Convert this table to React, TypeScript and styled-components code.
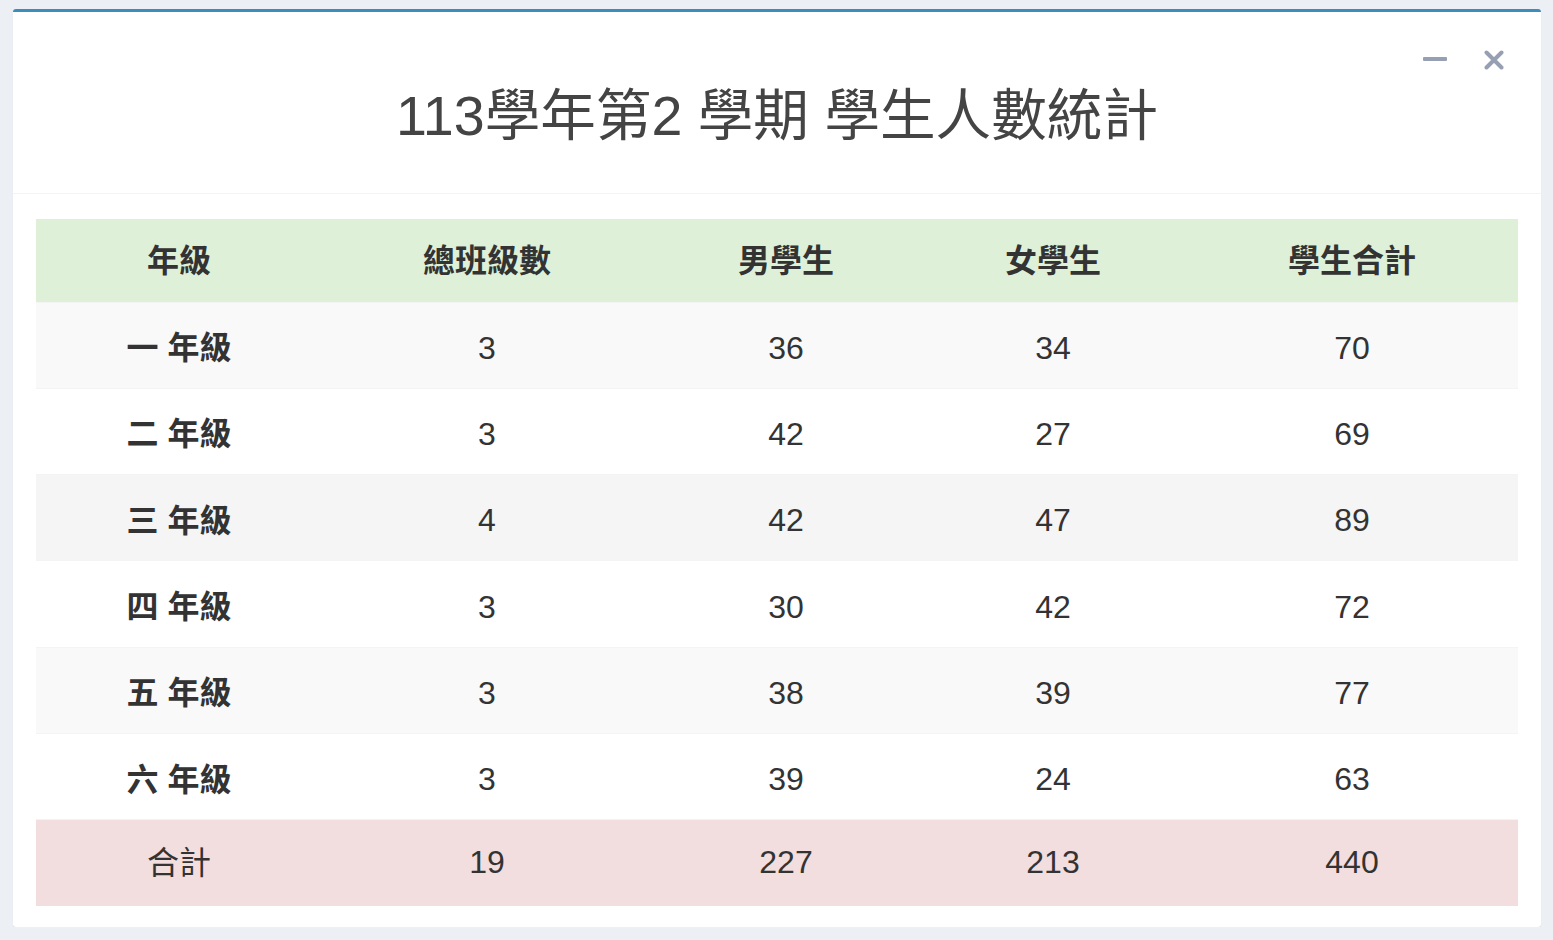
import React from "react";
import styled, { createGlobalStyle } from "styled-components";

const GlobalStyle = createGlobalStyle`
  html, body {
    margin: 0;
    padding: 0;
    background: #ecf0f5;
    font-family: "Liberation Sans", Arial, "Noto Sans CJK TC", sans-serif;
    color: #333;
  }
`;

const Page = styled.div`
  padding: 9px 12px 0 13px;
`;

const Box = styled.section`
  background: #fff;
  border-top: 3px solid #3c8dbc;
  border-radius: 3px;
  box-shadow: 0 1px 1px rgba(0, 0, 0, 0.1);
`;

const Header = styled.header`
  display: flex;
  flex-direction: column;
  padding: 38px 37px 44px 37px;
  border-bottom: 1px solid #f4f4f4;
`;

const Tools = styled.div`
  display: flex;
  justify-content: flex-end;
  align-items: center;
  gap: 37px;
  height: 20px;
`;

const ToolButton = styled.button`
  display: flex;
  align-items: center;
  justify-content: center;
  padding: 0;
  border: 0;
  background: transparent;
  cursor: pointer;
  color: #97a0b3;
`;

const Title = styled.h1`
  margin: 13px 0 0;
  text-align: center;
  font-family: "Liberation Sans", Arial, "Noto Sans CJK TC", sans-serif;
  font-weight: normal;
  font-size: 55.6px;
  line-height: 66px;
  color: #444;
`;

const Body = styled.div`
  padding: 25px 23px 21px;
`;

const Table = styled.table`
  width: 100%;
  border-collapse: collapse;
  table-layout: fixed;
  font-size: 32px;
`;

const HeadRow = styled.tr`
  background: #dff0d8;
`;

const HeadCell = styled.th`
  box-sizing: border-box;
  height: 83px;
  padding: 0 0 5px;
  text-align: center;
  vertical-align: middle;
  font-weight: bold;
  color: #333;
`;

const Row = styled.tr<{ $bg: string }>`
  background: ${(p) => p.$bg};
  border-top: 1px solid #f4f4f4;
`;

const GradeCell = styled.th<{ $bold?: boolean }>`
  box-sizing: border-box;
  height: 86.3px;
  padding: 0 0 ${(p) => (p.$bold ? "0" : "6px")};
  text-align: center;
  vertical-align: middle;
  font-weight: ${(p) => (p.$bold ? "bold" : "normal")};
  color: #333;
`;

const Cell = styled.td<{ $total?: boolean }>`
  box-sizing: border-box;
  height: 86.3px;
  padding: ${(p) => (p.$total ? "0 0 1px" : "6px 0 0")};
  text-align: center;
  vertical-align: middle;
  color: #333;
`;

const MinusIcon = () => (
  <svg width="24" height="20" viewBox="0 0 24 20">
    <rect x="0" y="7" width="24" height="4" rx="1" fill="currentColor" />
  </svg>
);

const CloseIcon = () => (
  <svg width="20" height="20" viewBox="0 0 20 20">
    <path d="M2.5 2.5 L17.5 17.5 M17.5 2.5 L2.5 17.5" stroke="currentColor" strokeWidth="4" strokeLinecap="round" />
  </svg>
);

const rows = [
  { grade: "一 年級", classes: 3, boys: 36, girls: 34, total: 70, bg: "#f9f9f9" },
  { grade: "二 年級", classes: 3, boys: 42, girls: 27, total: 69, bg: "#ffffff" },
  { grade: "三 年級", classes: 4, boys: 42, girls: 47, total: 89, bg: "#f5f5f5" },
  { grade: "四 年級", classes: 3, boys: 30, girls: 42, total: 72, bg: "#ffffff" },
  { grade: "五 年級", classes: 3, boys: 38, girls: 39, total: 77, bg: "#f9f9f9" },
  { grade: "六 年級", classes: 3, boys: 39, girls: 24, total: 63, bg: "#ffffff" },
];

export default function App() {
  return (
    <>
      <GlobalStyle />
      <Page>
        <Box>
          <Header>
            <Tools>
              <ToolButton aria-label="minimize">
                <MinusIcon />
              </ToolButton>
              <ToolButton aria-label="close">
                <CloseIcon />
              </ToolButton>
            </Tools>
            <Title>113學年第2 學期 學生人數統計</Title>
          </Header>
          <Body>
            <Table>
              <colgroup>
                <col style={{ width: 286 }} />
                <col style={{ width: 330 }} />
                <col style={{ width: 268 }} />
                <col style={{ width: 266 }} />
                <col style={{ width: 332 }} />
              </colgroup>
              <thead>
                <HeadRow>
                  <HeadCell>年級</HeadCell>
                  <HeadCell>總班級數</HeadCell>
                  <HeadCell>男學生</HeadCell>
                  <HeadCell>女學生</HeadCell>
                  <HeadCell>學生合計</HeadCell>
                </HeadRow>
              </thead>
              <tbody>
                {rows.map((r) => (
                  <Row key={r.grade} $bg={r.bg}>
                    <GradeCell $bold>{r.grade}</GradeCell>
                    <Cell>{r.classes}</Cell>
                    <Cell>{r.boys}</Cell>
                    <Cell>{r.girls}</Cell>
                    <Cell>{r.total}</Cell>
                  </Row>
                ))}
                <Row $bg="#f2dede">
                  <GradeCell>合計</GradeCell>
                  <Cell $total>19</Cell>
                  <Cell $total>227</Cell>
                  <Cell $total>213</Cell>
                  <Cell $total>440</Cell>
                </Row>
              </tbody>
            </Table>
          </Body>
        </Box>
      </Page>
    </>
  );
}
